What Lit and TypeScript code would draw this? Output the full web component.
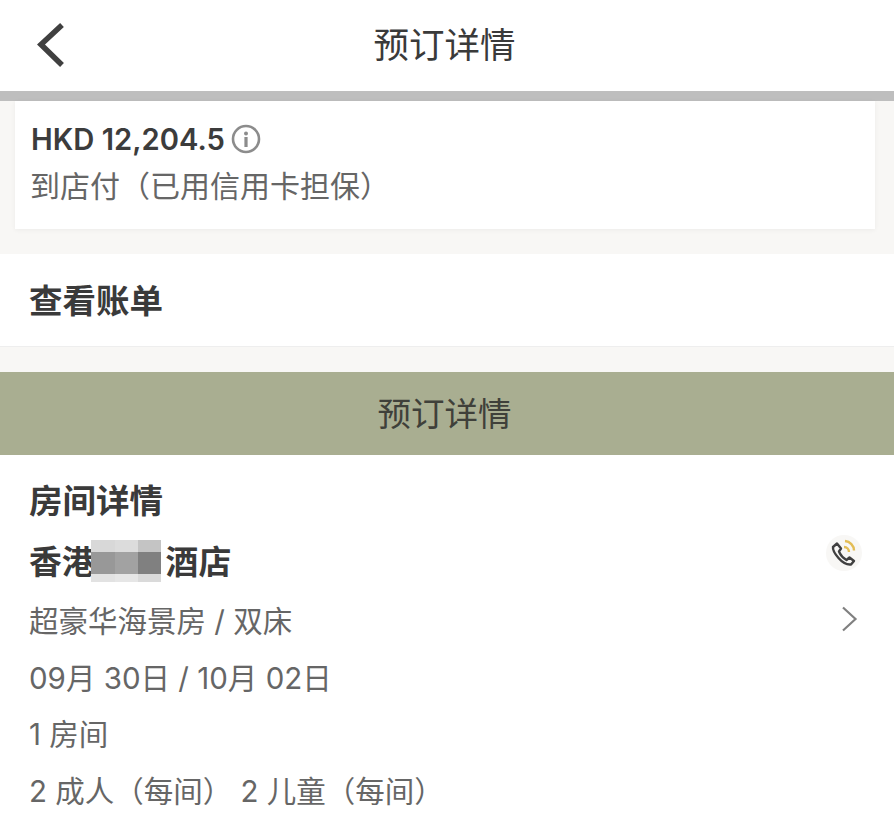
import { LitElement, html, css } from 'lit';
import { customElement } from 'lit/decorators.js';

const MOSAIC = ['#d8d8d8', '#dcdcdc', '#c4c4c4', '#989898', '#a2a2a2', '#808080', '#e2e2e2', '#e6e6e6', '#dadada'];

@customElement('app-root')
export class AppRoot extends LitElement {
  static styles = css`
    :host {
      display: block;
      width: 894px;
      height: 822px;
      overflow: hidden;
      background: #fff;
      font-family: Inter, 'Noto Sans CJK SC', sans-serif;
      color: #333;
    }

    .topbar {
      height: 91px;
      display: flex;
      align-items: center;
      justify-content: center;
      position: relative;
      font-size: 35.5px;
      color: #3a3a3a;
      padding: 0 5px 7px 0;
      box-sizing: border-box;
    }

    .back {
      position: absolute;
      left: 36px;
      top: 22px;
    }

    .shade {
      height: 10px;
      background: #bebebe;
    }

    .summary {
      background: #f8f7f5;
      padding: 0 19px 25px 15px;
    }

    .card {
      height: 128px;
      box-sizing: border-box;
      background: #fff;
      padding: 19px 16px 0;
      box-shadow: 0 1px 5px rgba(0, 0, 0, 0.05);
    }

    .price {
      display: flex;
      align-items: center;
      gap: 6px;
      height: 38px;
      font-size: 29.2px;
      font-weight: 600;
      color: #3c3c3c;
    }

    .pay {
      margin: 8px 0 0 -1px;
      font-size: 30px;
      line-height: 40px;
      color: #666;
    }

    .bill {
      height: 93px;
      box-sizing: border-box;
      border-bottom: 1px solid #eee;
      padding: 25px 29px 0;
      font-size: 33.5px;
      line-height: 44px;
      font-weight: 700;
      color: #3a3a3a;
    }

    .gap {
      height: 25px;
      background: #f8f7f5;
    }

    .band {
      height: 83px;
      display: flex;
      align-items: center;
      justify-content: center;
      background: #a9ae91;
      font-size: 33.5px;
      color: #3f403a;
      padding: 0 5px 4px 0;
      box-sizing: border-box;
    }

    .details {
      padding: 24px 32px 0 29px;
    }

    .heading {
      font-size: 33.5px;
      line-height: 44px;
      font-weight: 700;
      color: #3a3a3a;
    }

    .hotel {
      display: flex;
      align-items: center;
      margin-top: 14px;
      height: 44px;
      font-size: 32.8px;
      font-weight: 700;
      color: #3a3a3a;
    }

    .mosaic {
      display: grid;
      grid-template-columns: 24px 23px 23px;
      grid-template-rows: 12px 22px 8px;
      margin: 4px 5px 0 -4px;
    }

    .phone {
      margin-left: auto;
      margin-top: -12px;
    }

    .line {
      display: flex;
      align-items: center;
      justify-content: space-between;
      height: 40px;
      margin-top: 16.5px;
      font-size: 29.5px;
      color: #666;
    }

    .hotel + .line {
      margin-top: 18px;
    }

    .chevron {
      margin-right: 4px;
    }
  `;

  render() {
    return html`
      <div class="topbar">
        <svg class="back" width="30" height="46" viewBox="0 0 30 46" fill="none">
          <path d="M26 3 L5 22.5 L26 43" stroke="#404040" stroke-width="5.5" />
        </svg>
        预订详情
      </div>
      <div class="shade"></div>

      <div class="summary">
        <div class="card">
          <div class="price">
            HKD 12,204.5
            <svg width="30" height="30" viewBox="0 0 30 30" fill="none">
              <circle cx="15" cy="15" r="13" stroke="#8c8c8c" stroke-width="2.6" />
              <circle cx="15" cy="9.5" r="2" fill="#8c8c8c" />
              <rect x="13.4" y="13" width="3.2" height="10" fill="#8c8c8c" />
            </svg>
          </div>
          <div class="pay">到店付（已用信用卡担保）</div>
        </div>
      </div>

      <div class="bill">查看账单</div>
      <div class="gap"></div>
      <div class="band">预订详情</div>

      <div class="details">
        <div class="heading">房间详情</div>
        <div class="hotel">
          香港
          <div class="mosaic">
            ${MOSAIC.map((c) => html`<span style="background:${c}"></span>`)}
          </div>
          酒店
          <svg class="phone" width="36" height="36" viewBox="0 0 36 36" fill="none">
            <circle cx="18" cy="18" r="18" fill="#f8f7f5" />
            <path
              d="M7 12 L11 8.5 L15 13.5 L13 16.5 C14 19 17 23 20.5 25 L23.5 22.5 L28 26 L25 29.5 C21 30 16 27 12.5 23 C9 19 6.5 15.5 7 12 Z"
              stroke="#404040"
              stroke-width="2.4"
              stroke-linejoin="round"
            />
            <path d="M18 12 C21 12 23 14.5 23 17" stroke="#e3bd55" stroke-width="2.4" />
            <path d="M19 6 C24 6.5 28 10.5 28 15.5" stroke="#e3bd55" stroke-width="2.4" />
          </svg>
        </div>
        <div class="line">
          <span>超豪华海景房 / 双床</span>
          <svg class="chevron" width="17" height="26" viewBox="0 0 17 26" fill="none">
            <path d="M2 1.5 L14.5 13 L2 24.5" stroke="#808080" stroke-width="2.2" />
          </svg>
        </div>
        <div class="line">09月 30日 / 10月 02日</div>
        <div class="line">1 房间</div>
        <div class="line">2 成人（每间） 2 儿童（每间）</div>
      </div>
    `;
  }
}
